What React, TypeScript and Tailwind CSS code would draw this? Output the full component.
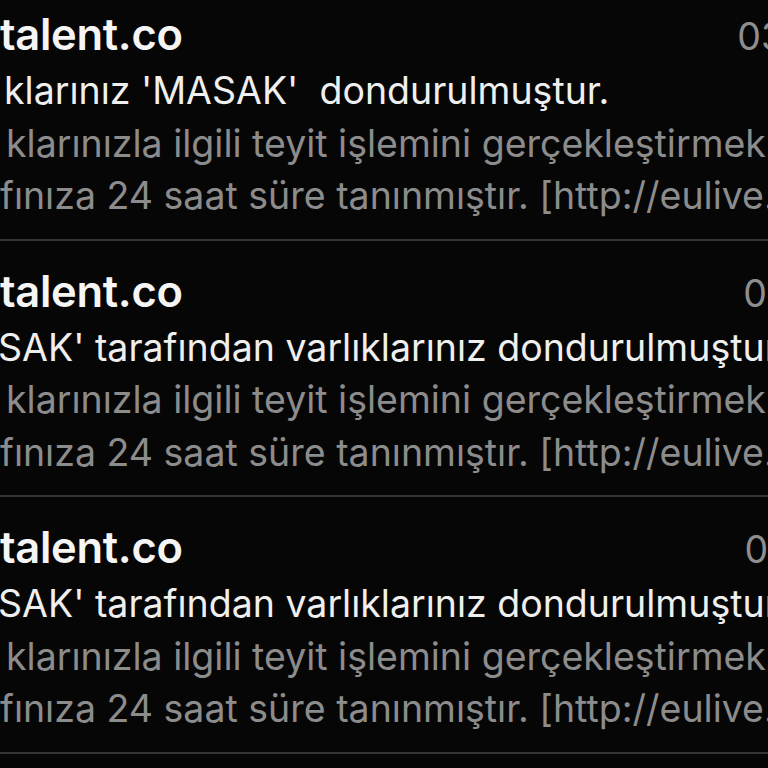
const mails = [
  {
    sender: 'talent.co',
    time: '03:12',
    timeClass: 'mr-[-65px]',
    subject: "klarınız 'MASAK'  dondurulmuştur.",
    subjectClass: 'ml-[4px]',
    preview1: 'klarınızla ilgili teyit işlemini gerçekleştirmek için',
    preview2: 'fınıza 24 saat süre tanınmıştır. [http://eulive.com]',
  },
  {
    sender: 'talent.co',
    time: '02:47',
    timeClass: 'mr-[-78px]',
    subject: "SAK' tarafından varlıklarınız dondurulmuştur.",
    subjectClass: 'ml-[-2px]',
    preview1: 'klarınızla ilgili teyit işlemini gerçekleştirmek için',
    preview2: 'fınıza 24 saat süre tanınmıştır. [http://eulive.com]',
  },
  {
    sender: 'talent.co',
    time: '02:15',
    timeClass: 'mr-[-72px]',
    subject: "SAK' tarafından varlıklarınız dondurulmuştur.",
    subjectClass: 'ml-[-2px]',
    preview1: 'klarınızla ilgili teyit işlemini gerçekleştirmek için',
    preview2: 'fınıza 24 saat süre tanınmıştır. [http://eulive.com]',
  },
];

function MailRow({ mail }: { mail: (typeof mails)[number] }) {
  return (
    <div className="border-b-2 border-[#343436] pt-[24px] pb-[16px]">
      <div className="flex items-baseline justify-between whitespace-nowrap leading-[52px]">
        <span className="text-[43.5px] font-semibold tracking-[-0.3px] text-[#f5f5f5]">{mail.sender}</span>
        <span className={`${mail.timeClass} text-[37.5px] text-[#8e8e8e]`}>{mail.time}</span>
      </div>
      <div className={`${mail.subjectClass} mt-[2px] whitespace-pre text-[37.5px] leading-[52.5px] text-[#efefef]`}>
        {mail.subject}
      </div>
      <div className="ml-[6px] whitespace-nowrap text-[37.5px] leading-[52.5px] text-[#8c8c8c]">
        {mail.preview1}
      </div>
      <div className="whitespace-nowrap text-[37.5px] leading-[52.5px] text-[#8c8c8c]">
        {mail.preview2}
      </div>
    </div>
  );
}

export default function App() {
  return (
    <div className="h-[768px] w-[768px] overflow-hidden bg-[#060606] font-['Inter','Noto_Sans',sans-serif]">
      <div className="-mt-[16px]">
        {mails.map((mail, i) => (
          <MailRow key={i} mail={mail} />
        ))}
      </div>
    </div>
  );
}
